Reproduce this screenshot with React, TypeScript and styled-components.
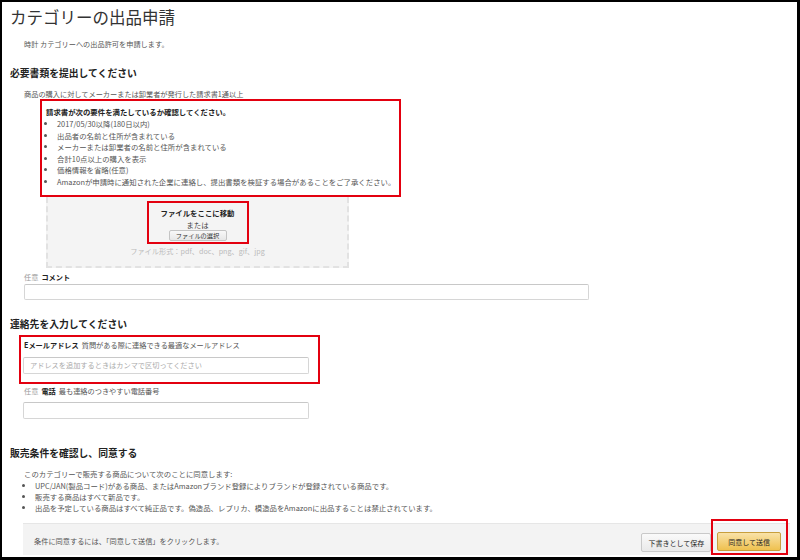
import React from 'react';
import styled, { createGlobalStyle } from 'styled-components';

const GlobalStyle = createGlobalStyle`
  html, body {
    margin: 0;
    padding: 0;
    background: #000;
  }
  * {
    box-sizing: border-box;
  }
`;

const Frame = styled.div`
  width: 800px;
  height: 560px;
  overflow: hidden;
  background: #fff;
  border-style: solid;
  border-color: #000;
  border-width: 2px 3px 3px 2px;
  padding: 0 7px 0 8px;
  font-family: 'Noto Sans CJK JP', 'Noto Sans', sans-serif;
  color: #444;
  font-size: 7.4px;
`;

const Title = styled.h1`
  margin: 3px 0 0;
  font-size: 16.5px;
  line-height: 24px;
  font-weight: 400;
  color: #333;
`;

const Note = styled.p<{ $top?: number; $indent?: number; $height?: number }>`
  margin: ${(p) => p.$top ?? 0}px 0 0 ${(p) => p.$indent ?? 14}px;
  line-height: ${(p) => p.$height ?? 12}px;
  font-size: 7.2px;
  color: #555;
`;

const SectionTitle = styled.h2<{ $top: number }>`
  margin: ${(p) => p.$top}px 0 0;
  font-size: 9.8px;
  line-height: 14px;
  font-weight: 700;
  color: #222;
`;

const Highlight = styled.div`
  border: 2px solid #e3000f;
`;

const ChecklistBox = styled(Highlight)`
  margin: 0 0 0 30px;
  width: 361px;
  padding: 5px 4px 7px;
`;

const ChecklistTitle = styled.div`
  font-weight: 700;
  line-height: 12px;
  color: #222;
`;

const BulletList = styled.ul<{ $line: number }>`
  margin: 0;
  padding-left: 11px;
  list-style: disc;
  line-height: ${(p) => p.$line}px;
  color: #555;
  white-space: nowrap;
`;

const DropZone = styled.div`
  margin-left: 36px;
  width: 303px;
  height: 71px;
  background: #f4f4f4;
  border: 2px dashed #e2e2e2;
  border-top: none;
  padding-top: 4px;
  display: flex;
  flex-direction: column;
  align-items: center;
`;

const DropTarget = styled(Highlight)`
  width: 102px;
  height: 43px;
  padding-top: 4px;
  display: flex;
  flex-direction: column;
  align-items: center;
`;

const DropHeading = styled.div`
  font-weight: 700;
  line-height: 12px;
  color: #222;
`;

const DropOr = styled.div`
  line-height: 11px;
  color: #444;
`;

const FileButton = styled.button`
  height: 11px;
  width: 58px;
  padding: 0;
  font-family: inherit;
  font-size: 6.2px;
  line-height: 9px;
  color: #333;
  background: linear-gradient(#f8f8f8, #e7e7e7);
  border: 1px solid #c4c4c4;
  border-radius: 2px;
`;

const FormatHint = styled.div`
  margin-top: 1px;
  line-height: 12px;
  font-size: 7.2px;
  color: #bbb;
`;

const FieldLabel = styled.div<{ $top: number; $indent?: number }>`
  margin: ${(p) => p.$top}px 0 0 ${(p) => p.$indent ?? 14}px;
  line-height: 12px;
  font-size: 7.2px;
  color: #555;
`;

const Optional = styled.span`
  color: #999;
  margin-right: 3px;
`;

const Strong = styled.strong`
  color: #222;
  font-weight: 700;
  margin-right: 3px;
`;

const TextField = styled.input<{ $width: number; $top: number; $height: number; $indent?: number }>`
  display: block;
  margin: ${(p) => p.$top}px 0 0 ${(p) => p.$indent ?? 13}px;
  width: ${(p) => p.$width}px;
  height: ${(p) => p.$height}px;
  border: 1px solid #d6d6d6;
  border-top-color: #c8c8c8;
  border-radius: 2px;
  padding: 0 6px;
  font-family: inherit;
  font-size: 7.2px;
  color: #333;
  background: #fff;
  outline: none;

  &::placeholder {
    color: #aaa;
  }
`;

const ContactBox = styled(Highlight)`
  margin: 4px 0 0 9px;
  width: 301px;
  padding: 2px 0 8px 3px;
`;

const TermsList = styled.div`
  margin: 8px 0 0 14px;
  color: #555;
`;

const TermsIntro = styled.div`
  line-height: 12px;
`;

const Footer = styled.div`
  margin: 10px 0 0 13px;
  width: 767px;
  height: 32px;
  background: #f3f3f3;
  border-top: 1px solid #e6e6e6;
  padding: 0 2px 0 11px;
  display: flex;
  align-items: flex-end;
`;

const FooterText = styled.div`
  flex: 1;
  align-self: center;
  padding-top: 2px;
  font-size: 7.2px;
  color: #555;
`;

const Button = styled.button<{ $primary?: boolean }>`
  height: 19px;
  padding: 0 ${(p) => (p.$primary ? 10 : 6)}px;
  font-family: inherit;
  font-size: 7px;
  color: #222;
  white-space: nowrap;
  border-radius: 2px;
  border: 1px solid ${(p) => (p.$primary ? '#c89f3d' : '#c9c9c9')};
  background: ${(p) =>
    p.$primary
      ? 'linear-gradient(#f9e2a8, #efc14f)'
      : 'linear-gradient(#fafafa, #e9e9e9)'};
`;

const SaveButton = styled(Button)`
  margin-bottom: 3px;
`;

const SubmitMark = styled(Highlight)`
  height: 36px;
  padding: 11px 5px 2px 4px;
  flex-shrink: 0;
`;

const checklist = [
  '2017/05/30以降(180日以内)',
  '出品者の名前と住所が含まれている',
  'メーカーまたは卸業者の名前と住所が含まれている',
  '合計10点以上の購入を表示',
  '価格情報を省略(任意)',
  'Amazonが申請時に通知された企業に連絡し、提出書類を検証する場合があることをご了承ください。',
];

const terms = [
  'UPC/JAN(製品コード)がある商品、またはAmazonブランド登録によりブランドが登録されている商品です。',
  '販売する商品はすべて新品です。',
  '出品を予定している商品はすべて純正品です。偽造品、レプリカ、模造品をAmazonに出品することは禁止されています。',
];

export default function App() {
  return (
    <>
      <GlobalStyle />
      <Frame>
        <Title>カテゴリーの出品申請</Title>
        <Note $top={9}>時計 カテゴリーへの出品許可を申請します。</Note>

        <SectionTitle $top={16}>必要書類を提出してください</SectionTitle>
        <Note $top={9} $height={10}>
          商品の購入に対してメーカーまたは卸業者が発行した請求書1通以上
        </Note>
        <ChecklistBox>
          <ChecklistTitle>請求書が次の要件を満たしているか確認してください。</ChecklistTitle>
          <BulletList $line={11.6}>
            {checklist.map((item) => (
              <li key={item}>{item}</li>
            ))}
          </BulletList>
        </ChecklistBox>
        <DropZone>
          <DropTarget>
            <DropHeading>ファイルをここに移動</DropHeading>
            <DropOr>または</DropOr>
            <FileButton type="button">ファイルの選択</FileButton>
          </DropTarget>
          <FormatHint>ファイル形式：pdf、doc、png、gif、jpg</FormatHint>
        </DropZone>

        <FieldLabel $top={3}>
          <Optional>任意</Optional>
          <Strong>コメント</Strong>
        </FieldLabel>
        <TextField $top={1} $width={565} $height={16} $indent={14} />

        <SectionTitle $top={17}>連絡先を入力してください</SectionTitle>
        <ContactBox>
          <FieldLabel $top={0} $indent={0}>
            <Strong>Eメールアドレス</Strong>
            質問がある際に連絡できる最適なメールアドレス
          </FieldLabel>
          <TextField
            $top={6}
            $width={286}
            $height={17}
            $indent={-1}
            placeholder="アドレスを追加するときはカンマで区切ってください"
          />
        </ContactBox>
        <FieldLabel $top={1}>
          <Optional>任意</Optional>
          <Strong>電話</Strong>
          最も連絡のつきやすい電話番号
        </FieldLabel>
        <TextField $top={5} $width={286} $height={17} />

        <SectionTitle $top={27}>販売条件を確認し、同意する</SectionTitle>
        <TermsList>
          <TermsIntro>このカテゴリーで販売する商品について次のことに同意します:</TermsIntro>
          <BulletList $line={11.3}>
            {terms.map((item) => (
              <li key={item}>{item}</li>
            ))}
          </BulletList>
        </TermsList>

        <Footer>
          <FooterText>条件に同意するには、「同意して送信」をクリックします。</FooterText>
          <SaveButton type="button">下書きとして保存</SaveButton>
          <SubmitMark>
            <Button type="button" $primary>
              同意して送信
            </Button>
          </SubmitMark>
        </Footer>
      </Frame>
    </>
  );
}
